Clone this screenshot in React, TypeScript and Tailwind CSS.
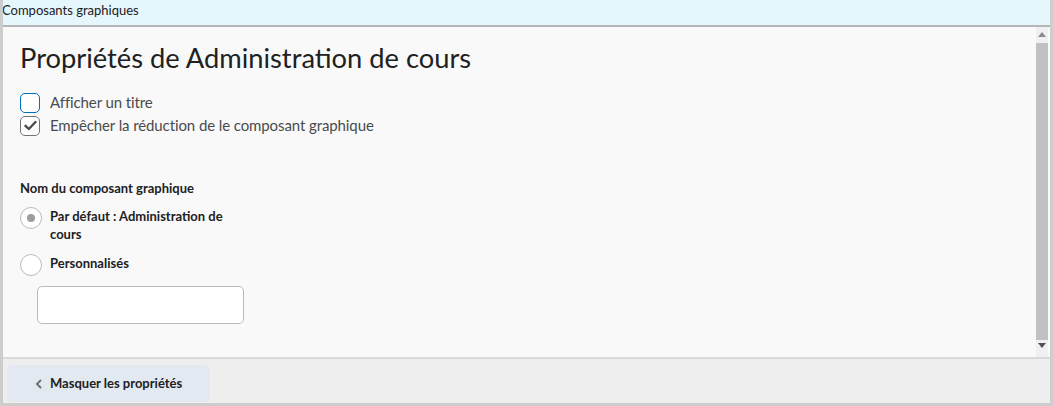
import React, { useState } from 'react';

const font = { fontFamily: 'Lato, "Noto Sans", sans-serif' };

const Checkbox: React.FC<{ checked?: boolean; focused?: boolean; label: string }> = ({ checked, focused, label }) => (
  <label className="flex items-center gap-[10px] h-[23px]">
    <span
      className={`w-[20px] h-[20px] rounded-[5px] bg-white flex items-center justify-center ${
        focused ? 'border-[1.5px] border-[#006fbf]' : 'border border-[#6e7376]'
      }`}
    >
      {checked && (
        <svg width="13" height="11" viewBox="0 0 13 11">
          <path d="M1.5 5.8 L4.8 9 L11.5 2" fill="none" stroke="#494c4e" strokeWidth="2.4" strokeLinecap="round" strokeLinejoin="round" />
        </svg>
      )}
    </span>
    <span className="text-[15px] text-[#494c4e] tracking-[-0.1px]">{label}</span>
  </label>
);

const Radio: React.FC<{ checked?: boolean; children: React.ReactNode }> = ({ checked, children }) => (
  <div className="flex items-start gap-[8px]">
    <span className="w-[22px] h-[22px] shrink-0 rounded-full border border-[#b8bcbf] bg-white flex items-center justify-center">
      {checked && <span className="w-[8px] h-[8px] rounded-full bg-[#9a9ea1]" />}
    </span>
    <div className="text-[13px] font-bold text-[#202122] leading-[18px] w-[190px]">{children}</div>
  </div>
);

export default function App() {
  const [name, setName] = useState('');
  return (
    <div className="w-[1053px] h-[406px] bg-[#f9f9f9] flex flex-col border-l-[3px] border-r-[3px] border-b-[3px] border-[#cdcdcd] overflow-hidden" style={font}>
      {/* barre de titre */}
      <div className="h-[27px] shrink-0 bg-[#e6f6fd] border-b-2 border-[#b5b5b5] flex items-start -ml-[1px]">
        <span className="text-[13px] text-[#202122] leading-[20px]">Composants graphiques</span>
      </div>

      {/* contenu + barre de défilement */}
      <div className="flex-1 flex min-h-0">
        <div className="flex-1 pl-[17px] pt-[14px]">
          <h1 className="text-[27.3px] leading-[34px] text-[#202122]">Propriétés de Administration de cours</h1>
          <div className="mt-[16px] flex flex-col">
            <Checkbox focused label="Afficher un titre" />
            <Checkbox checked label="Empêcher la réduction de le composant graphique" />
          </div>

          <div className="mt-[42px] text-[13px] font-bold text-[#202122]">Nom du composant graphique</div>
          <div className="mt-[8px] flex flex-col gap-[11px]">
            <Radio checked>Par défaut : Administration de cours</Radio>
            <Radio>Personnalisés</Radio>
          </div>
          <input
            value={name}
            onChange={e => setName(e.target.value)}
            className="mt-[10px] ml-[17px] w-[207px] h-[38px] rounded-[5px] border border-[#b8bcbf] bg-white outline-none"
          />
        </div>

        <div className="w-[12px] mr-[2px] bg-[#f0f0f0] flex flex-col items-center">
          <div className="h-[15px] flex items-center justify-center">
            <svg width="8" height="5" viewBox="0 0 8 5"><path d="M0 5 L4 0 L8 5 Z" fill="#8a8a8a" /></svg>
          </div>
          <div className="flex-1 w-full bg-[#c1c1c1] mb-[15px] mt-[1px]" />
          <div className="h-[8px] flex items-start justify-center -mt-[12px] mb-[6px]">
            <svg width="8" height="5" viewBox="0 0 8 5"><path d="M0 0 L8 0 L4 5 Z" fill="#505050" /></svg>
          </div>
        </div>
      </div>

      {/* pied */}
      <div className="h-[46px] shrink-0 bg-[#eeeeee] border-t-2 border-[#d9d9d9] flex items-end px-[4px] pb-[1px]">
        <button className="w-[203px] h-[37px] bg-[#e3e9f1] rounded-[5px] flex items-center pl-[28px] gap-[8px] text-[13px] font-bold text-[#202122]">
          <svg width="7" height="10" viewBox="0 0 7 10">
            <path d="M5.5 1.5 L2 5 L5.5 8.5" fill="none" stroke="#6e7376" strokeWidth="2" strokeLinecap="round" strokeLinejoin="round" />
          </svg>
          Masquer les propriétés
        </button>
      </div>
    </div>
  );
}
